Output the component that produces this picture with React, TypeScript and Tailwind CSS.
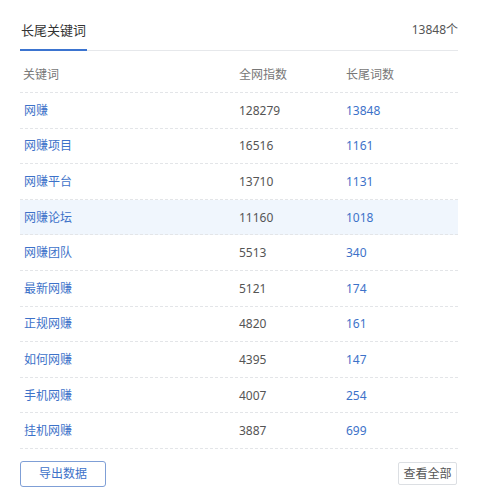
import React from 'react';

const rows = [
  { kw: '网赚', index: '128279', count: '13848' },
  { kw: '网赚项目', index: '16516', count: '1161' },
  { kw: '网赚平台', index: '13710', count: '1131' },
  { kw: '网赚论坛', index: '11160', count: '1018', active: true },
  { kw: '网赚团队', index: '5513', count: '340' },
  { kw: '最新网赚', index: '5121', count: '174' },
  { kw: '正规网赚', index: '4820', count: '161' },
  { kw: '如何网赚', index: '4395', count: '147' },
  { kw: '手机网赚', index: '4007', count: '254' },
  { kw: '挂机网赚', index: '3887', count: '699' },
];

export default function App() {
  return (
    <div
      className="w-[500px] h-[499px] bg-white px-[20px] pt-[20px] text-[12px]"
      style={{ fontFamily: '"Noto Sans", "Noto Sans CJK SC", sans-serif' }}
    >
      {/* Tab header */}
      <div className="flex items-end justify-between border-b border-[#e6e8eb] w-[438px]">
        <div className="text-[13px] text-[#333] leading-[20px] pb-[9px] px-[1px] border-b-2 border-[#3b74d0] -mb-[1px]">
          长尾关键词
        </div>
        <div className="text-[12px] text-[#555] leading-[20px] pb-[10px]">13848个</div>
      </div>

      {/* Table */}
      <div className="w-[438px]">
        <div className="grid grid-cols-[219px_107px_1fr] h-[42px] items-end pb-[8px] border-b border-dashed border-[#e3e5e8] text-[#777]">
          <div className="pl-[3px]">关键词</div>
          <div>全网指数</div>
          <div>长尾词数</div>
        </div>
        {rows.map((r) => (
          <div
            key={r.kw}
            className={`grid grid-cols-[219px_107px_1fr] h-[35.6px] items-center border-b border-dashed border-[#e3e5e8] ${
              r.active ? 'bg-[#f0f6fd]' : ''
            }`}
          >
            <div className="pl-[4px] pt-[1px] text-[#3d72c9]">{r.kw}</div>
            <div className="pt-[1px] text-[#555]">{r.index}</div>
            <div className="pt-[1px] text-[#3d72c9]">{r.count}</div>
          </div>
        ))}
      </div>

      {/* Footer buttons */}
      <div className="flex items-center justify-between w-[438px] mt-[12px]">
        <button className="w-[86px] h-[26px] border border-[#7f9fd6] rounded-[3px] text-[#3d72c9] text-[12px]">
          导出数据
        </button>
        <button className="w-[59px] h-[23px] mr-[1px] border border-[#dcdfe3] rounded-[2px] text-[#555] text-[12px]">
          查看全部
        </button>
      </div>
    </div>
  );
}
